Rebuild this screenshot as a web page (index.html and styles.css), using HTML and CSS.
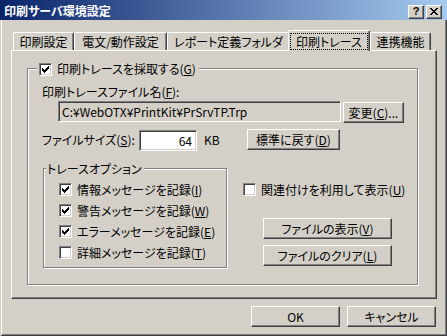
FILE: index.html
```html
<!DOCTYPE html>
<html lang="ja">
<head>
<meta charset="utf-8">
<title>印刷サーバ環境設定</title>
<link rel="stylesheet" href="styles.css">
</head>
<body>
<div class="window">
  <div class="titlebar">
    <span class="title">印刷サーバ環境設定</span>
    <div class="tbtns">
      <span class="tbtn help">?</span>
      <span class="tbtn close"><svg width="8" height="7" viewBox="0 0 8 7" shape-rendering="crispEdges"><path d="M0 0h2v1H0zM6 0h2v1H6zM1 1h2v1H1zM5 1h2v1H5zM2 2h4v1H2zM3 3h2v1H3zM2 4h4v1H2zM1 5h2v1H1zM5 5h2v1H5zM0 6h2v1H0zM6 6h2v1H6z" fill="#000"/></svg></span>
    </div>
  </div>
  <div class="body">
    <div class="tabs">
      <div class="tab t1">印刷設定</div>
      <div class="tab t2">電文/動作設定</div>
      <div class="tab t3">レポート定義フォルダ</div>
      <div class="tab active"><span class="focus">印刷トレース</span></div>
      <div class="tab t5">連携機能</div>
    </div>
    <div class="panel">
      <div class="group outer">
        <div class="legend main-legend">
          <span class="check checked"><svg width="7" height="7" viewBox="0 0 7 7" shape-rendering="crispEdges"><path d="M0 2H1V3H2V4H3V3H4V2H5V1H6V0H7V3H6V4H5V5H4V6H3V7H2V6H1V5H0Z" fill="#000"/></svg></span>
          <span>印刷トレースを採取する(<u>G</u>)</span>
        </div>
        <div class="field-label">印刷トレースファイル名(<u>F</u>):</div>
        <div class="path-row">
          <div class="textbox readonly path">C:¥WebOTX¥PrintKit¥PrSrvTP.Trp</div>
          <button class="btn change">変更(<u>C</u>)...</button>
        </div>
        <div class="size-row">
          <span class="size-label">ファイルサイズ(<u>S</u>):</span>
          <div class="textbox num">64</div>
          <span class="unit">KB</span>
          <button class="btn reset">標準に戻す(<u>D</u>)</button>
        </div>
        <div class="lower">
          <div class="group inner">
            <div class="legend opt-legend">トレースオプション</div>
            <div class="cb"><span class="check checked"><svg width="7" height="7" viewBox="0 0 7 7" shape-rendering="crispEdges"><path d="M0 2H1V3H2V4H3V3H4V2H5V1H6V0H7V3H6V4H5V5H4V6H3V7H2V6H1V5H0Z" fill="#000"/></svg></span><span>情報メッセージを記録(<u>I</u>)</span></div>
            <div class="cb"><span class="check checked"><svg width="7" height="7" viewBox="0 0 7 7" shape-rendering="crispEdges"><path d="M0 2H1V3H2V4H3V3H4V2H5V1H6V0H7V3H6V4H5V5H4V6H3V7H2V6H1V5H0Z" fill="#000"/></svg></span><span>警告メッセージを記録(<u>W</u>)</span></div>
            <div class="cb"><span class="check checked"><svg width="7" height="7" viewBox="0 0 7 7" shape-rendering="crispEdges"><path d="M0 2H1V3H2V4H3V3H4V2H5V1H6V0H7V3H6V4H5V5H4V6H3V7H2V6H1V5H0Z" fill="#000"/></svg></span><span>エラーメッセージを記録(<u>E</u>)</span></div>
            <div class="cb"><span class="check"></span><span>詳細メッセージを記録(<u>T</u>)</span></div>
          </div>
          <div class="side">
            <div class="cb"><span class="check"></span><span>関連付けを利用して表示(<u>U</u>)</span></div>
            <button class="btn wide first">ファイルの表示(<u>V</u>)</button>
            <button class="btn wide second">ファイルのクリア(<u>L</u>)</button>
          </div>
        </div>
      </div>
    </div>
    <div class="footer">
      <button class="btn dlg">OK</button>
      <button class="btn dlg">キャンセル</button>
    </div>
  </div>
</div>
</body>
</html>
```
FILE: styles.css
```css
* { box-sizing: border-box; }
html, body { margin: 0; padding: 0; }
body {
  width: 447px;
  height: 336px;
  overflow: hidden;
  background: #D4D0C8;
  font-family: "Noto Sans CJK JP", "Noto Sans", sans-serif;
  font-size: 12px;
  line-height: 14px;
  color: #000;
  font-feature-settings: "palt";
}
u { text-decoration: underline; text-underline-offset: 1px; }

.window {
  width: 447px;
  height: 336px;
  background: #D4D0C8;
  box-shadow: inset 1px 0 #D4D0C8, inset -1px -1px #404040, inset 2px 0 #fff, inset -2px -2px #808080;
  display: flex;
  flex-direction: column;
}

.titlebar {
  height: 20px;
  flex: none;
  background: linear-gradient(to right, #0A246A, #A6CAF0);
  display: flex;
  align-items: flex-start;
  padding: 0 5px 0 4px;
}
.title {
  color: #fff;
  font-weight: bold;
  flex: 1;
  line-height: 14px;
  margin-top: 4px;
}
.tbtns { display: flex; gap: 2px; margin-top: 5px; }
.tbtn {
  width: 16px;
  height: 14px;
  background: #D4D0C8;
  border: 1px solid;
  border-color: #fff #404040 #404040 #fff;
  box-shadow: inset -1px -1px #808080;
  display: flex;
  align-items: center;
  justify-content: center;
}
.help {
  font-family: "Liberation Sans", sans-serif;
  font-weight: bold;
  font-size: 11px;
  line-height: 11px;
  padding-bottom: 1px;
}
.close svg { display: block; margin-left: -1px; margin-top: -1px; }

.body {
  flex: 1;
  padding: 10px 0 0 11px;
  display: flex;
  flex-direction: column;
}

.tabs {
  display: flex;
  align-items: flex-end;
  height: 20px;
  padding-left: 2px;
  position: relative;
  z-index: 1;
}
.tab {
  height: 18px;
  border: 1px solid;
  border-bottom: none;
  border-color: #fff #404040 #404040 #fff;
  box-shadow: inset -1px 0 #808080;
  border-radius: 2px 2px 0 0;
  text-align: center;
  line-height: 17px;
  white-space: nowrap;
  background: #D4D0C8;
}
.t1 { width: 61px; }
.t2 { width: 93px; }
.t3 { width: 123px; }
.t5 { width: 61px; margin-left: 2px; }
.tab.active {
  width: 82px;
  height: 21px;
  margin: 0 -2px -1px;
  padding: 2px 1px 0;
  position: relative;
  z-index: 2;
  line-height: 15px;
  text-align: left;
}
.focus {
  display: block;
  height: 17px;
  border: 1px dotted #000;
  text-align: center;
}

.panel {
  width: 426px;
  height: 249px;
  border: 1px solid;
  border-color: #fff #404040 #404040 #fff;
  box-shadow: inset -1px -1px #808080;
  padding: 17px 0 0 15px;
}

.group {
  position: relative;
  border: 1px solid #808080;
  box-shadow: inset 1px 1px #fff, 1px 1px #fff;
}
.outer {
  width: 391px;
  height: 217px;
  padding: 16px 0 0 14px;
}
.legend {
  position: absolute;
  background: #D4D0C8;
  display: flex;
  align-items: center;
  white-space: nowrap;
}
.main-legend {
  top: -8px;
  left: 9px;
  height: 16px;
  padding: 0 3px 0 2px;
  gap: 5px;
}
.opt-legend {
  top: -7px;
  left: 2px;
  height: 14px;
  padding: 0 2px 0 1px;
}

.check {
  width: 13px;
  height: 13px;
  flex: none;
  background: #fff;
  border: 1px solid;
  border-color: #808080 #fff #fff #808080;
  box-shadow: inset 1px 1px #404040, inset -1px -1px #D4D0C8;
  padding: 2px;
  display: flex;
}
.check svg { display: block; }

.field-label { height: 14px; white-space: nowrap; }

.path-row {
  display: flex;
  align-items: flex-start;
  margin: 2px 0 0 16px;
}
.textbox {
  height: 21px;
  border: 1px solid;
  border-color: #808080 #fff #fff #808080;
  box-shadow: inset 1px 1px #404040, inset -1px -1px #D4D0C8;
  line-height: 19px;
  white-space: nowrap;
  overflow: hidden;
}
.path {
  width: 283px;
  padding-left: 3px;
  background: #D4D0C8;
}
.btn {
  font: inherit;
  color: #000;
  height: 21px;
  margin: 0;
  padding: 0;
  background: #D4D0C8;
  border: 1px solid;
  border-color: #fff #404040 #404040 #fff;
  box-shadow: inset -1px -1px #808080;
  display: flex;
  align-items: center;
  justify-content: center;
  white-space: nowrap;
  line-height: 14px;
}
.change { width: 61px; margin: 1px 0 0 2px; }

.size-row {
  display: flex;
  align-items: flex-start;
  height: 22px;
  margin-top: 6px;
}
.size-label { width: 97px; line-height: 22px; white-space: nowrap; }
.num {
  width: 58px;
  margin-top: 1px;
  background: #fff;
  text-align: right;
  padding-right: 4px;
}
.unit { width: 43px; margin-left: 7px; line-height: 21px; }
.reset { width: 93px; }

.lower {
  display: flex;
  align-items: flex-start;
  margin: 17px 0 0 1px;
}
.inner {
  width: 184px;
  height: 100px;
  flex: none;
  padding: 10px 0 0 15px;
}
.cb {
  height: 21px;
  display: flex;
  align-items: center;
  gap: 5px;
  white-space: nowrap;
}
.side {
  margin-left: 16px;
  padding-top: 11px;
  display: flex;
  flex-direction: column;
}
.wide { width: 129px; margin-left: 20px; }
.first { margin-top: 18px; }
.second { margin-top: 6px; }

.footer {
  display: flex;
  justify-content: flex-end;
  gap: 7px;
  margin-top: 7px;
  padding-right: 11px;
}
.dlg { width: 89px; }
```
